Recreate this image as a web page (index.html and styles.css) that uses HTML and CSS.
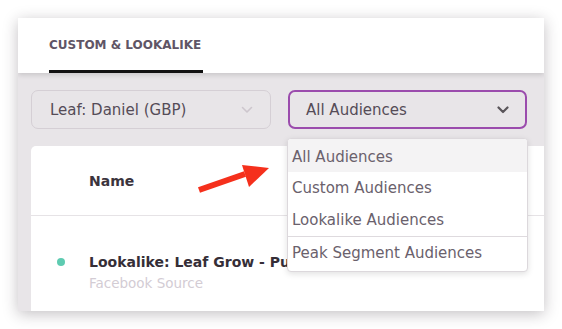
FILE: index.html
```html
<!DOCTYPE html>
<html>
<head>
<meta charset="utf-8">
<link rel="stylesheet" href="styles.css">
</head>
<body>
<div class="window">
  <div class="header">
    <div class="tab">CUSTOM &amp; LOOKALIKE</div>
  </div>
  <div class="body">
    <div class="filters">
      <div class="select select-muted">
        <span class="select-label">Leaf: Daniel (GBP)</span>
        <svg class="chev" width="12" height="8" viewBox="0 0 12 8"><path d="M1.5 1.5 L6 6 L10.5 1.5" fill="none" stroke="currentColor" stroke-width="1.6" stroke-linecap="round" stroke-linejoin="round"/></svg>
      </div>
      <div class="select select-active">
        <span class="select-label">All Audiences</span>
        <svg class="chev" width="12" height="8" viewBox="0 0 12 8"><path d="M1.5 1.5 L6 6 L10.5 1.5" fill="none" stroke="currentColor" stroke-width="2.2" stroke-linecap="round" stroke-linejoin="round"/></svg>
        <div class="menu">
          <div class="menu-item is-hover">All Audiences</div>
          <div class="menu-item">Custom Audiences</div>
          <div class="menu-item">Lookalike Audiences</div>
          <div class="menu-sep"></div>
          <div class="menu-item">Peak Segment Audiences</div>
        </div>
      </div>
    </div>
    <div class="card">
      <div class="thead">Name</div>
      <div class="row">
        <span class="dot"></span>
        <div class="row-text">
          <div class="row-title">Lookalike: Leaf Grow - Pu</div>
          <div class="row-sub">Facebook Source</div>
        </div>
      </div>
    </div>
  </div>
</div>
<svg class="arrow" width="80" height="36" viewBox="0 0 80 36">
  <path d="M8 31 L54 15" stroke="#f5301c" stroke-width="6" fill="none"/>
  <polygon points="51,6 78,9 58,28" fill="#f5301c"/>
</svg>
</body>
</html>
```
FILE: styles.css
```css
* { box-sizing: border-box; }
html, body { margin: 0; padding: 0; background: #ffffff; }
body {
  font-family: "DejaVu Sans", "Liberation Sans", sans-serif;
  width: 562px;
  height: 329px;
  overflow: hidden;
  position: relative;
}
.window {
  margin: 18px 0 0 18px;
  width: 526px;
  height: 293px;
  overflow: hidden;
  display: flex;
  flex-direction: column;
  box-shadow: 0 3px 14px rgba(40, 30, 40, 0.28);
  background: #e8e5e8;
}
.header {
  height: 55px;
  flex: none;
  background: #ffffff;
  padding-left: 31px;
  position: relative;
  z-index: 2;
  box-shadow: 0 2px 5px rgba(0, 0, 0, 0.14);
  display: flex;
}
.tab {
  height: 55px;
  padding-top: 19px;
  line-height: 16px;
  font-size: 12px;
  font-weight: bold;
  color: #5f5566;
  border-bottom: 3px solid #111111;
  width: 154px;
  white-space: nowrap;
}
.body {
  flex: 1;
  display: flex;
  flex-direction: column;
  padding: 17px 0 0 13px;
  background: #e8e5e8;
}
.filters {
  display: flex;
  gap: 17px;
  height: 39px;
  flex: none;
  position: relative;
  z-index: 3;
}
.select {
  position: relative;
  height: 39px;
  border-radius: 7px;
  display: flex;
  align-items: center;
  justify-content: space-between;
  font-size: 15px;
}
.select-muted {
  width: 240px;
  border: 1.5px solid #d5cfd5;
  padding: 0 17px 0 18px;
  color: #554c57;
}
.select-muted .chev { color: #cdc6cd; }
.select-active {
  width: 239px;
  border: 2px solid #9b4cad;
  padding: 0 16px 0 16px;
  color: #554c57;
}
.select-active .chev { color: #5a555a; }
.select-label { white-space: nowrap; }
.menu {
  position: absolute;
  top: 46px;
  left: -3px;
  width: 241px;
  background: #ffffff;
  border: 1px solid #dcd8dc;
  border-radius: 4px;
  box-shadow: 0 2px 6px rgba(0, 0, 0, 0.12);
  padding-bottom: 2px;
  overflow: hidden;
}
.menu-item {
  height: 32px;
  line-height: 32px;
  padding-left: 4px;
  font-size: 15px;
  color: #6a616c;
  white-space: nowrap;
}
.menu-item.is-hover { background: #f4f3f4; height: 33px; line-height: 37px; }
.menu-sep { height: 1px; background: #dedade; }
.card {
  margin-top: 17px;
  flex: 1;
  background: #ffffff;
  border-radius: 5px 0 0 0;
}
.thead {
  height: 70px;
  display: flex;
  align-items: center;
  padding-left: 58px;
  font-size: 14px;
  font-weight: bold;
  color: #3b343d;
  border-bottom: 1px solid #e6e3e6;
}
.row {
  display: flex;
  align-items: flex-start;
  padding: 37px 0 0 26px;
}
.dot {
  width: 8px;
  height: 8px;
  border-radius: 50%;
  background: #5ecbb1;
  margin-top: 5px;
  flex: none;
}
.row-text { margin-left: 24px; }
.row-title {
  font-size: 14px;
  font-weight: bold;
  color: #352e37;
  line-height: 18px;
  white-space: nowrap;
}
.row-sub {
  margin-top: 4px;
  font-size: 13.5px;
  color: #d3ccd4;
  line-height: 17px;
  white-space: nowrap;
}
.arrow {
  position: absolute;
  left: 191px;
  top: 159px;
  z-index: 5;
}
```
